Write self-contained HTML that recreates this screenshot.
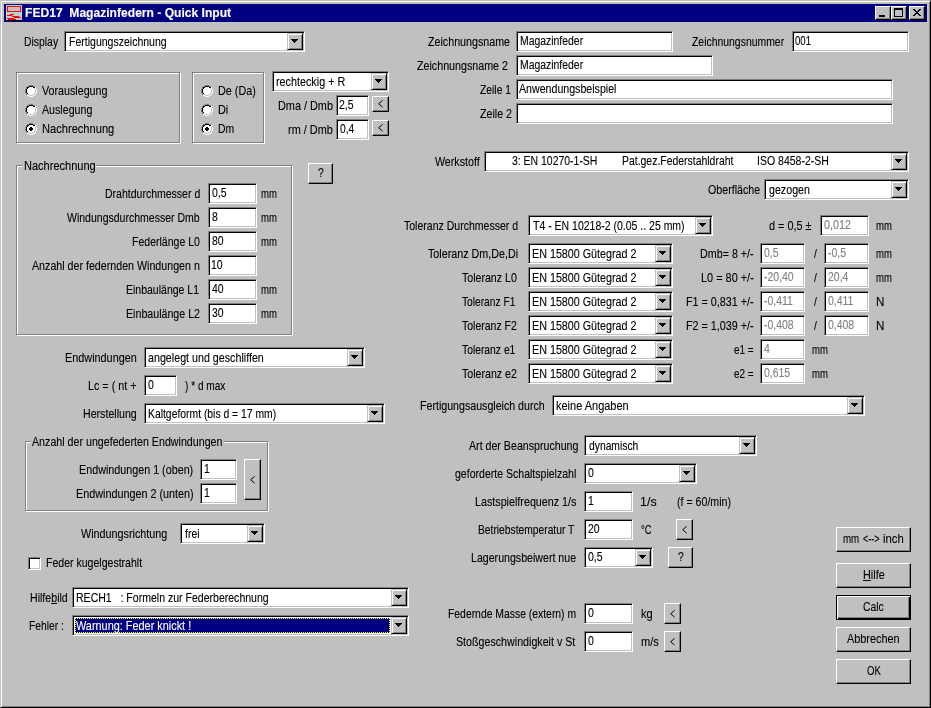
<!DOCTYPE html>
<html><head><meta charset="utf-8"><title>FED17</title>
<style>
html,body{margin:0;padding:0}
body{width:931px;height:708px;overflow:hidden;background:#c0c0c0;position:relative;font-family:"Liberation Sans",sans-serif;font-size:13px;line-height:15px}
div{box-sizing:border-box}
#tx{position:absolute;left:0;top:0;width:931px;height:708px;will-change:transform}
.t{position:absolute;-webkit-text-stroke:0.12px;transform-origin:0 0;white-space:nowrap;height:15px;line-height:15px}
.t.b{font-weight:bold}
u{text-decoration:underline;text-underline-offset:1px}
.ed{position:absolute;background:#fff;border:1px solid;border-color:#808080 #fff #fff #808080;box-shadow:inset 1px 1px 0 #000,inset -1px -1px 0 #c0c0c0}
.ed.dis{background:#fff}
.cb{position:absolute;background:#c0c0c0;border:1px solid;border-color:#c0c0c0 #000 #000 #c0c0c0;box-shadow:inset 1px 1px 0 #fff,inset -1px -1px 0 #808080}
.cb svg{position:absolute;left:3px;top:5px}
.lt{position:absolute}
.sel{position:absolute;background:#000080;outline:1px dotted #ffff00;outline-offset:-1px}
.btn{position:absolute;background:#c0c0c0;border:1px solid;border-color:#fff #000 #000 #fff;box-shadow:inset -1px -1px 0 #808080}
.btn.def{border-color:#000;box-shadow:inset 1px 1px 0 #fff,inset -1px -1px 0 #000,inset -2px -2px 0 #808080}
.gb{position:absolute;border:1px solid #808080;box-shadow:1px 1px 0 #fff}
.gb b{position:absolute;left:0;top:0;right:0;bottom:0;border-left:1px solid #fff;border-top:1px solid #fff;display:block}
.lg{position:absolute;background:#c0c0c0}
.rd{position:absolute;width:12px;height:12px}
.rd svg{display:block}
.chk{position:absolute;width:13px;height:13px;background:#fff;border:1px solid;border-color:#808080 #fff #fff #808080;box-shadow:inset 1px 1px 0 #000,inset -1px -1px 0 #c0c0c0}
.fr{position:absolute;left:0;top:0;width:931px;height:708px;border:1px solid;border-color:#c0c0c0 #000 #000 #c0c0c0;box-shadow:inset 1px 1px 0 #fff,inset -1px -1px 0 #808080;pointer-events:none}
.tb{position:absolute;left:4px;top:4px;width:923px;height:18px;background:#000080}
.wb{position:absolute;top:6px;width:16px;height:14px;background:#c0c0c0;border:1px solid;border-color:#fff #000 #000 #fff;box-shadow:inset -1px -1px 0 #808080}
</style></head><body>
<div class="fr"></div>
<div class="tb"></div>
<svg style="position:absolute;left:6px;top:5px" width="16" height="16" viewBox="0 0 16 16" shape-rendering="crispEdges">
<rect width="16" height="16" fill="#c0d0d0"/>
<rect x="1.5" y="1.5" width="13" height="5" fill="#c0c0c0" stroke="#ff0000" stroke-width="1"/>
<rect x="4" y="9" width="4" height="1" fill="#f00"/><rect x="1" y="10" width="5" height="1" fill="#f00"/>
<rect x="6" y="11" width="7" height="1" fill="#f00"/><rect x="8" y="12" width="7" height="1" fill="#f00"/>
<rect x="1" y="13" width="7" height="1" fill="#f00"/><rect x="2" y="14" width="8" height="1" fill="#f00"/>
<rect x="0" y="15" width="16" height="1" fill="#000"/>
</svg>
<div class="wb" style="left:875px"><div style="position:absolute;left:3px;top:8px;width:6px;height:2px;background:#000"></div></div>
<div class="wb" style="left:891px"><div style="position:absolute;left:2px;top:1px;width:9px;height:9px;border:1px solid #000;border-top-width:2px"></div></div>
<div class="wb" style="left:909px"><svg style="position:absolute;left:3px;top:2px" width="8" height="7" viewBox="0 0 8 7" shape-rendering="crispEdges"><path d="M0 0h2v1h1v1h2v-1h1v-1h2v1h-1v1h-1v1h-1v1h1v1h1v1h1v1h-2v-1h-1v-1h-2v1h-1v1h-2v-1h1v-1h1v-1h1v-1h-1v-1h-1v-1h-1z" fill="#000"/></svg></div>
<div class="ed" style="left:64px;top:31px;width:241px;height:21px"></div>
<div class="cb" style="left:287px;top:33px;width:16px;height:17px"><svg width="7" height="4" viewBox="0 0 7 4" shape-rendering="crispEdges"><path d="M0 0h7v1h-1v1h-1v1h-1v1h-1v-1h-1v-1h-1v-1h-1z" fill="#000"/></svg></div>
<div class="gb" style="left:16px;top:72px;width:164px;height:71px"><b></b></div>
<div class="rd" style="left:25px;top:85px"><svg width="12" height="12" viewBox="0 0 12 12" shape-rendering="crispEdges"><path fill="#808080" d="M4 0h4v1h-4zM2 1h2v1h-2zM8 1h2v1h-2zM1 2h1v1h-1zM1 3h1v1h-1zM0 4h1v1h-1zM0 5h1v1h-1zM0 6h1v1h-1zM0 7h1v1h-1zM1 8h1v1h-1zM1 9h1v1h-1z"/><path fill="#000" d="M4 1h4v1h-4zM2 2h2v1h-2zM8 2h2v1h-2zM2 3h1v1h-1zM1 4h1v1h-1zM1 5h1v1h-1zM1 6h1v1h-1zM1 7h1v1h-1zM2 8h1v1h-1z"/><path fill="#fff" d="M4 2h4v1h-4zM10 2h1v1h-1zM3 3h6v1h-6zM10 3h1v1h-1zM2 4h8v1h-8zM11 4h1v1h-1zM2 5h8v1h-8zM11 5h1v1h-1zM2 6h8v1h-8zM11 6h1v1h-1zM2 7h8v1h-8zM11 7h1v1h-1zM3 8h6v1h-6zM10 8h1v1h-1zM4 9h4v1h-4zM10 9h1v1h-1zM2 10h2v1h-2zM8 10h2v1h-2zM4 11h4v1h-4z"/><path fill="#c0c0c0" d="M9 3h1v1h-1zM10 4h1v1h-1zM10 5h1v1h-1zM10 6h1v1h-1zM10 7h1v1h-1zM9 8h1v1h-1zM2 9h2v1h-2zM8 9h2v1h-2zM4 10h4v1h-4z"/></svg></div>
<div class="rd" style="left:25px;top:104px"><svg width="12" height="12" viewBox="0 0 12 12" shape-rendering="crispEdges"><path fill="#808080" d="M4 0h4v1h-4zM2 1h2v1h-2zM8 1h2v1h-2zM1 2h1v1h-1zM1 3h1v1h-1zM0 4h1v1h-1zM0 5h1v1h-1zM0 6h1v1h-1zM0 7h1v1h-1zM1 8h1v1h-1zM1 9h1v1h-1z"/><path fill="#000" d="M4 1h4v1h-4zM2 2h2v1h-2zM8 2h2v1h-2zM2 3h1v1h-1zM1 4h1v1h-1zM1 5h1v1h-1zM1 6h1v1h-1zM1 7h1v1h-1zM2 8h1v1h-1z"/><path fill="#fff" d="M4 2h4v1h-4zM10 2h1v1h-1zM3 3h6v1h-6zM10 3h1v1h-1zM2 4h8v1h-8zM11 4h1v1h-1zM2 5h8v1h-8zM11 5h1v1h-1zM2 6h8v1h-8zM11 6h1v1h-1zM2 7h8v1h-8zM11 7h1v1h-1zM3 8h6v1h-6zM10 8h1v1h-1zM4 9h4v1h-4zM10 9h1v1h-1zM2 10h2v1h-2zM8 10h2v1h-2zM4 11h4v1h-4z"/><path fill="#c0c0c0" d="M9 3h1v1h-1zM10 4h1v1h-1zM10 5h1v1h-1zM10 6h1v1h-1zM10 7h1v1h-1zM9 8h1v1h-1zM2 9h2v1h-2zM8 9h2v1h-2zM4 10h4v1h-4z"/></svg></div>
<div class="rd" style="left:25px;top:123px"><svg width="12" height="12" viewBox="0 0 12 12" shape-rendering="crispEdges"><path fill="#808080" d="M4 0h4v1h-4zM2 1h2v1h-2zM8 1h2v1h-2zM1 2h1v1h-1zM1 3h1v1h-1zM0 4h1v1h-1zM0 5h1v1h-1zM0 6h1v1h-1zM0 7h1v1h-1zM1 8h1v1h-1zM1 9h1v1h-1z"/><path fill="#000" d="M4 1h4v1h-4zM2 2h2v1h-2zM8 2h2v1h-2zM2 3h1v1h-1zM1 4h1v1h-1zM1 5h1v1h-1zM1 6h1v1h-1zM1 7h1v1h-1zM2 8h1v1h-1z"/><path fill="#fff" d="M4 2h4v1h-4zM10 2h1v1h-1zM3 3h6v1h-6zM10 3h1v1h-1zM2 4h8v1h-8zM11 4h1v1h-1zM2 5h8v1h-8zM11 5h1v1h-1zM2 6h8v1h-8zM11 6h1v1h-1zM2 7h8v1h-8zM11 7h1v1h-1zM3 8h6v1h-6zM10 8h1v1h-1zM4 9h4v1h-4zM10 9h1v1h-1zM2 10h2v1h-2zM8 10h2v1h-2zM4 11h4v1h-4z"/><path fill="#c0c0c0" d="M9 3h1v1h-1zM10 4h1v1h-1zM10 5h1v1h-1zM10 6h1v1h-1zM10 7h1v1h-1zM9 8h1v1h-1zM2 9h2v1h-2zM8 9h2v1h-2zM4 10h4v1h-4z"/><path fill="#000000" d="M5 4h2v1h1v2h-1v1h-2v-1h-1v-2h1z"/></svg></div>
<div class="gb" style="left:192px;top:72px;width:72px;height:71px"><b></b></div>
<div class="rd" style="left:201px;top:85px"><svg width="12" height="12" viewBox="0 0 12 12" shape-rendering="crispEdges"><path fill="#808080" d="M4 0h4v1h-4zM2 1h2v1h-2zM8 1h2v1h-2zM1 2h1v1h-1zM1 3h1v1h-1zM0 4h1v1h-1zM0 5h1v1h-1zM0 6h1v1h-1zM0 7h1v1h-1zM1 8h1v1h-1zM1 9h1v1h-1z"/><path fill="#000" d="M4 1h4v1h-4zM2 2h2v1h-2zM8 2h2v1h-2zM2 3h1v1h-1zM1 4h1v1h-1zM1 5h1v1h-1zM1 6h1v1h-1zM1 7h1v1h-1zM2 8h1v1h-1z"/><path fill="#fff" d="M4 2h4v1h-4zM10 2h1v1h-1zM3 3h6v1h-6zM10 3h1v1h-1zM2 4h8v1h-8zM11 4h1v1h-1zM2 5h8v1h-8zM11 5h1v1h-1zM2 6h8v1h-8zM11 6h1v1h-1zM2 7h8v1h-8zM11 7h1v1h-1zM3 8h6v1h-6zM10 8h1v1h-1zM4 9h4v1h-4zM10 9h1v1h-1zM2 10h2v1h-2zM8 10h2v1h-2zM4 11h4v1h-4z"/><path fill="#c0c0c0" d="M9 3h1v1h-1zM10 4h1v1h-1zM10 5h1v1h-1zM10 6h1v1h-1zM10 7h1v1h-1zM9 8h1v1h-1zM2 9h2v1h-2zM8 9h2v1h-2zM4 10h4v1h-4z"/></svg></div>
<div class="rd" style="left:201px;top:104px"><svg width="12" height="12" viewBox="0 0 12 12" shape-rendering="crispEdges"><path fill="#808080" d="M4 0h4v1h-4zM2 1h2v1h-2zM8 1h2v1h-2zM1 2h1v1h-1zM1 3h1v1h-1zM0 4h1v1h-1zM0 5h1v1h-1zM0 6h1v1h-1zM0 7h1v1h-1zM1 8h1v1h-1zM1 9h1v1h-1z"/><path fill="#000" d="M4 1h4v1h-4zM2 2h2v1h-2zM8 2h2v1h-2zM2 3h1v1h-1zM1 4h1v1h-1zM1 5h1v1h-1zM1 6h1v1h-1zM1 7h1v1h-1zM2 8h1v1h-1z"/><path fill="#fff" d="M4 2h4v1h-4zM10 2h1v1h-1zM3 3h6v1h-6zM10 3h1v1h-1zM2 4h8v1h-8zM11 4h1v1h-1zM2 5h8v1h-8zM11 5h1v1h-1zM2 6h8v1h-8zM11 6h1v1h-1zM2 7h8v1h-8zM11 7h1v1h-1zM3 8h6v1h-6zM10 8h1v1h-1zM4 9h4v1h-4zM10 9h1v1h-1zM2 10h2v1h-2zM8 10h2v1h-2zM4 11h4v1h-4z"/><path fill="#c0c0c0" d="M9 3h1v1h-1zM10 4h1v1h-1zM10 5h1v1h-1zM10 6h1v1h-1zM10 7h1v1h-1zM9 8h1v1h-1zM2 9h2v1h-2zM8 9h2v1h-2zM4 10h4v1h-4z"/></svg></div>
<div class="rd" style="left:201px;top:123px"><svg width="12" height="12" viewBox="0 0 12 12" shape-rendering="crispEdges"><path fill="#808080" d="M4 0h4v1h-4zM2 1h2v1h-2zM8 1h2v1h-2zM1 2h1v1h-1zM1 3h1v1h-1zM0 4h1v1h-1zM0 5h1v1h-1zM0 6h1v1h-1zM0 7h1v1h-1zM1 8h1v1h-1zM1 9h1v1h-1z"/><path fill="#000" d="M4 1h4v1h-4zM2 2h2v1h-2zM8 2h2v1h-2zM2 3h1v1h-1zM1 4h1v1h-1zM1 5h1v1h-1zM1 6h1v1h-1zM1 7h1v1h-1zM2 8h1v1h-1z"/><path fill="#fff" d="M4 2h4v1h-4zM10 2h1v1h-1zM3 3h6v1h-6zM10 3h1v1h-1zM2 4h8v1h-8zM11 4h1v1h-1zM2 5h8v1h-8zM11 5h1v1h-1zM2 6h8v1h-8zM11 6h1v1h-1zM2 7h8v1h-8zM11 7h1v1h-1zM3 8h6v1h-6zM10 8h1v1h-1zM4 9h4v1h-4zM10 9h1v1h-1zM2 10h2v1h-2zM8 10h2v1h-2zM4 11h4v1h-4z"/><path fill="#c0c0c0" d="M9 3h1v1h-1zM10 4h1v1h-1zM10 5h1v1h-1zM10 6h1v1h-1zM10 7h1v1h-1zM9 8h1v1h-1zM2 9h2v1h-2zM8 9h2v1h-2zM4 10h4v1h-4z"/><path fill="#000000" d="M5 4h2v1h1v2h-1v1h-2v-1h-1v-2h1z"/></svg></div>
<div class="ed" style="left:272px;top:71px;width:117px;height:21px"></div>
<div class="cb" style="left:371px;top:73px;width:16px;height:17px"><svg width="7" height="4" viewBox="0 0 7 4" shape-rendering="crispEdges"><path d="M0 0h7v1h-1v1h-1v1h-1v1h-1v-1h-1v-1h-1v-1h-1z" fill="#000"/></svg></div>
<div class="ed" style="left:336px;top:95px;width:33px;height:21px"></div>
<div class="btn" style="left:372px;top:96px;width:17px;height:16px"></div>
<svg class="lt" style="left:378px;top:100px" width="5" height="8" viewBox="0 0 5 8"><path d="M4.6 0.4L0.7 3.7L4.6 7.2" fill="none" stroke="#000" stroke-width="1"/></svg>
<div class="ed" style="left:336px;top:119px;width:33px;height:21px"></div>
<div class="btn" style="left:372px;top:120px;width:17px;height:16px"></div>
<svg class="lt" style="left:378px;top:124px" width="5" height="8" viewBox="0 0 5 8"><path d="M4.6 0.4L0.7 3.7L4.6 7.2" fill="none" stroke="#000" stroke-width="1"/></svg>
<div class="gb" style="left:16px;top:165px;width:276px;height:170px"><b></b></div>
<div class="lg" style="left:23px;top:163px;width:73px;height:6px"></div>
<div class="btn" style="left:308px;top:163px;width:25px;height:21px"></div>
<div class="ed" style="left:208px;top:183px;width:49px;height:21px"></div>
<div class="ed" style="left:208px;top:207px;width:49px;height:21px"></div>
<div class="ed" style="left:208px;top:231px;width:49px;height:21px"></div>
<div class="ed" style="left:208px;top:255px;width:49px;height:21px"></div>
<div class="ed" style="left:208px;top:279px;width:49px;height:21px"></div>
<div class="ed" style="left:208px;top:303px;width:49px;height:21px"></div>
<div class="ed" style="left:144px;top:347px;width:221px;height:21px"></div>
<div class="cb" style="left:347px;top:349px;width:16px;height:17px"><svg width="7" height="4" viewBox="0 0 7 4" shape-rendering="crispEdges"><path d="M0 0h7v1h-1v1h-1v1h-1v1h-1v-1h-1v-1h-1v-1h-1z" fill="#000"/></svg></div>
<div class="ed" style="left:144px;top:375px;width:33px;height:21px"></div>
<div class="ed" style="left:144px;top:403px;width:241px;height:21px"></div>
<div class="cb" style="left:367px;top:405px;width:16px;height:17px"><svg width="7" height="4" viewBox="0 0 7 4" shape-rendering="crispEdges"><path d="M0 0h7v1h-1v1h-1v1h-1v1h-1v-1h-1v-1h-1v-1h-1z" fill="#000"/></svg></div>
<div class="gb" style="left:25px;top:441px;width:243px;height:70px"><b></b></div>
<div class="lg" style="left:31px;top:439px;width:192.5px;height:6px"></div>
<div class="ed" style="left:200px;top:459px;width:37px;height:21px"></div>
<div class="ed" style="left:200px;top:483px;width:37px;height:21px"></div>
<div class="btn" style="left:244px;top:459px;width:17px;height:41px"></div>
<svg class="lt" style="left:250px;top:476px" width="5" height="8" viewBox="0 0 5 8"><path d="M4.6 0.4L0.7 3.7L4.6 7.2" fill="none" stroke="#000" stroke-width="1"/></svg>
<div class="ed" style="left:180px;top:523px;width:85px;height:21px"></div>
<div class="cb" style="left:247px;top:525px;width:16px;height:17px"><svg width="7" height="4" viewBox="0 0 7 4" shape-rendering="crispEdges"><path d="M0 0h7v1h-1v1h-1v1h-1v1h-1v-1h-1v-1h-1v-1h-1z" fill="#000"/></svg></div>
<div class="chk" style="left:28px;top:557px"></div>
<div class="ed" style="left:72px;top:587px;width:337px;height:21px"></div>
<div class="cb" style="left:391px;top:589px;width:16px;height:17px"><svg width="7" height="4" viewBox="0 0 7 4" shape-rendering="crispEdges"><path d="M0 0h7v1h-1v1h-1v1h-1v1h-1v-1h-1v-1h-1v-1h-1z" fill="#000"/></svg></div>
<div class="ed" style="left:72px;top:615px;width:337px;height:21px"></div>
<div class="cb" style="left:391px;top:617px;width:16px;height:17px"><svg width="7" height="4" viewBox="0 0 7 4" shape-rendering="crispEdges"><path d="M0 0h7v1h-1v1h-1v1h-1v1h-1v-1h-1v-1h-1v-1h-1z" fill="#000"/></svg></div>
<div class="sel" style="left:75px;top:618px;width:315px;height:15px"></div>
<div class="ed" style="left:516px;top:31px;width:157px;height:21px"></div>
<div class="ed" style="left:792px;top:31px;width:117px;height:21px"></div>
<div class="ed" style="left:516px;top:55px;width:197px;height:21px"></div>
<div class="ed" style="left:516px;top:79px;width:377px;height:21px"></div>
<div class="ed" style="left:516px;top:103px;width:377px;height:21px"></div>
<div class="ed" style="left:484px;top:151px;width:425px;height:21px"></div>
<div class="cb" style="left:891px;top:153px;width:16px;height:17px"><svg width="7" height="4" viewBox="0 0 7 4" shape-rendering="crispEdges"><path d="M0 0h7v1h-1v1h-1v1h-1v1h-1v-1h-1v-1h-1v-1h-1z" fill="#000"/></svg></div>
<div class="ed" style="left:764px;top:179px;width:145px;height:21px"></div>
<div class="cb" style="left:891px;top:181px;width:16px;height:17px"><svg width="7" height="4" viewBox="0 0 7 4" shape-rendering="crispEdges"><path d="M0 0h7v1h-1v1h-1v1h-1v1h-1v-1h-1v-1h-1v-1h-1z" fill="#000"/></svg></div>
<div class="ed" style="left:528px;top:215px;width:185px;height:21px"></div>
<div class="cb" style="left:695px;top:217px;width:16px;height:17px"><svg width="7" height="4" viewBox="0 0 7 4" shape-rendering="crispEdges"><path d="M0 0h7v1h-1v1h-1v1h-1v1h-1v-1h-1v-1h-1v-1h-1z" fill="#000"/></svg></div>
<div class="ed dis" style="left:820px;top:215px;width:49px;height:21px"></div>
<div class="ed" style="left:528px;top:243px;width:145px;height:21px"></div>
<div class="cb" style="left:655px;top:245px;width:16px;height:17px"><svg width="7" height="4" viewBox="0 0 7 4" shape-rendering="crispEdges"><path d="M0 0h7v1h-1v1h-1v1h-1v1h-1v-1h-1v-1h-1v-1h-1z" fill="#000"/></svg></div>
<div class="ed dis" style="left:760px;top:243px;width:45px;height:21px"></div>
<div class="ed dis" style="left:824px;top:243px;width:45px;height:21px"></div>
<div class="ed" style="left:528px;top:267px;width:145px;height:21px"></div>
<div class="cb" style="left:655px;top:269px;width:16px;height:17px"><svg width="7" height="4" viewBox="0 0 7 4" shape-rendering="crispEdges"><path d="M0 0h7v1h-1v1h-1v1h-1v1h-1v-1h-1v-1h-1v-1h-1z" fill="#000"/></svg></div>
<div class="ed dis" style="left:760px;top:267px;width:45px;height:21px"></div>
<div class="ed dis" style="left:824px;top:267px;width:45px;height:21px"></div>
<div class="ed" style="left:528px;top:291px;width:145px;height:21px"></div>
<div class="cb" style="left:655px;top:293px;width:16px;height:17px"><svg width="7" height="4" viewBox="0 0 7 4" shape-rendering="crispEdges"><path d="M0 0h7v1h-1v1h-1v1h-1v1h-1v-1h-1v-1h-1v-1h-1z" fill="#000"/></svg></div>
<div class="ed dis" style="left:760px;top:291px;width:45px;height:21px"></div>
<div class="ed dis" style="left:824px;top:291px;width:45px;height:21px"></div>
<div class="ed" style="left:528px;top:315px;width:145px;height:21px"></div>
<div class="cb" style="left:655px;top:317px;width:16px;height:17px"><svg width="7" height="4" viewBox="0 0 7 4" shape-rendering="crispEdges"><path d="M0 0h7v1h-1v1h-1v1h-1v1h-1v-1h-1v-1h-1v-1h-1z" fill="#000"/></svg></div>
<div class="ed dis" style="left:760px;top:315px;width:45px;height:21px"></div>
<div class="ed dis" style="left:824px;top:315px;width:45px;height:21px"></div>
<div class="ed" style="left:528px;top:339px;width:145px;height:21px"></div>
<div class="cb" style="left:655px;top:341px;width:16px;height:17px"><svg width="7" height="4" viewBox="0 0 7 4" shape-rendering="crispEdges"><path d="M0 0h7v1h-1v1h-1v1h-1v1h-1v-1h-1v-1h-1v-1h-1z" fill="#000"/></svg></div>
<div class="ed dis" style="left:760px;top:339px;width:45px;height:21px"></div>
<div class="ed" style="left:528px;top:363px;width:145px;height:21px"></div>
<div class="cb" style="left:655px;top:365px;width:16px;height:17px"><svg width="7" height="4" viewBox="0 0 7 4" shape-rendering="crispEdges"><path d="M0 0h7v1h-1v1h-1v1h-1v1h-1v-1h-1v-1h-1v-1h-1z" fill="#000"/></svg></div>
<div class="ed dis" style="left:760px;top:363px;width:45px;height:21px"></div>
<div class="ed" style="left:552px;top:395px;width:313px;height:21px"></div>
<div class="cb" style="left:847px;top:397px;width:16px;height:17px"><svg width="7" height="4" viewBox="0 0 7 4" shape-rendering="crispEdges"><path d="M0 0h7v1h-1v1h-1v1h-1v1h-1v-1h-1v-1h-1v-1h-1z" fill="#000"/></svg></div>
<div class="ed" style="left:584px;top:435px;width:173px;height:21px"></div>
<div class="cb" style="left:739px;top:437px;width:16px;height:17px"><svg width="7" height="4" viewBox="0 0 7 4" shape-rendering="crispEdges"><path d="M0 0h7v1h-1v1h-1v1h-1v1h-1v-1h-1v-1h-1v-1h-1z" fill="#000"/></svg></div>
<div class="ed" style="left:584px;top:463px;width:113px;height:21px"></div>
<div class="cb" style="left:679px;top:465px;width:16px;height:17px"><svg width="7" height="4" viewBox="0 0 7 4" shape-rendering="crispEdges"><path d="M0 0h7v1h-1v1h-1v1h-1v1h-1v-1h-1v-1h-1v-1h-1z" fill="#000"/></svg></div>
<div class="ed" style="left:584px;top:491px;width:49px;height:21px"></div>
<div class="ed" style="left:584px;top:519px;width:49px;height:21px"></div>
<div class="btn" style="left:676px;top:519px;width:17px;height:21px"></div>
<svg class="lt" style="left:682px;top:526px" width="5" height="8" viewBox="0 0 5 8"><path d="M4.6 0.4L0.7 3.7L4.6 7.2" fill="none" stroke="#000" stroke-width="1"/></svg>
<div class="ed" style="left:584px;top:547px;width:69px;height:21px"></div>
<div class="cb" style="left:635px;top:549px;width:16px;height:17px"><svg width="7" height="4" viewBox="0 0 7 4" shape-rendering="crispEdges"><path d="M0 0h7v1h-1v1h-1v1h-1v1h-1v-1h-1v-1h-1v-1h-1z" fill="#000"/></svg></div>
<div class="btn" style="left:668px;top:547px;width:25px;height:21px"></div>
<div class="ed" style="left:584px;top:603px;width:49px;height:21px"></div>
<div class="btn" style="left:664px;top:603px;width:17px;height:21px"></div>
<svg class="lt" style="left:670px;top:610px" width="5" height="8" viewBox="0 0 5 8"><path d="M4.6 0.4L0.7 3.7L4.6 7.2" fill="none" stroke="#000" stroke-width="1"/></svg>
<div class="ed" style="left:584px;top:631px;width:49px;height:21px"></div>
<div class="btn" style="left:664px;top:631px;width:17px;height:21px"></div>
<svg class="lt" style="left:670px;top:638px" width="5" height="8" viewBox="0 0 5 8"><path d="M4.6 0.4L0.7 3.7L4.6 7.2" fill="none" stroke="#000" stroke-width="1"/></svg>
<div class="btn" style="left:836px;top:527px;width:75px;height:25px"></div>
<div class="btn" style="left:836px;top:563px;width:75px;height:25px"></div>
<div class="btn def" style="left:836px;top:595px;width:75px;height:25px"></div>
<div class="btn" style="left:836px;top:627px;width:75px;height:25px"></div>
<div class="btn" style="left:836px;top:659px;width:75px;height:25px"></div>
<div id="tx">
<div class="t" style="left:24.10px;top:34.00px;transform:scaleX(0.8000);color:#000;">Display</div>
<div class="t" style="left:68.59px;top:34.00px;transform:scaleX(0.8093);color:#000;">Fertigungszeichnung</div>
<div class="t" style="left:42.40px;top:83.00px;transform:scaleX(0.8229);color:#000;">Vorauslegung</div>
<div class="t" style="left:42.40px;top:102.00px;transform:scaleX(0.8198);color:#000;">Auslegung</div>
<div class="t" style="left:41.55px;top:121.00px;transform:scaleX(0.8544);color:#000;">Nachrechnung</div>
<div class="t" style="left:218.07px;top:83.00px;transform:scaleX(0.8298);color:#000;">De (Da)</div>
<div class="t" style="left:218.06px;top:102.00px;transform:scaleX(0.8386);color:#000;">Di</div>
<div class="t" style="left:218.10px;top:121.00px;transform:scaleX(0.8000);color:#000;">Dm</div>
<div class="t" style="left:276.07px;top:74.00px;transform:scaleX(0.8293);color:#000;">rechteckig + R</div>
<div class="t" style="left:278.26px;top:98.00px;transform:scaleX(0.8358);color:#000;">Dma / Dmb</div>
<div class="t" style="left:339.40px;top:97.00px;transform:scaleX(0.8059);color:#000;">2,5</div>
<div class="t" style="left:288.26px;top:122.00px;transform:scaleX(0.8403);color:#000;">rm / Dmb</div>
<div class="t" style="left:339.50px;top:121.00px;transform:scaleX(0.7942);color:#000;">0,4</div>
<div class="t" style="left:23.55px;top:158.00px;transform:scaleX(0.8483);color:#000;">Nachrechnung</div>
<div class="t" style="left:317.59px;top:165.00px;transform:scaleX(0.8033);color:#000;">?</div>
<div class="t" style="left:105.09px;top:186.00px;transform:scaleX(0.8086);color:#000;">Drahtdurchmesser d</div>
<div class="t" style="left:211.70px;top:185.00px;transform:scaleX(0.8050);color:#000;">0,5</div>
<div class="t" style="left:260.76px;top:186.00px;transform:scaleX(0.7350);color:#000;">mm</div>
<div class="t" style="left:67.40px;top:210.00px;transform:scaleX(0.8086);color:#000;">Windungsdurchmesser Dmb</div>
<div class="t" style="left:211.70px;top:209.00px;transform:scaleX(0.8050);color:#000;">8</div>
<div class="t" style="left:260.76px;top:210.00px;transform:scaleX(0.7350);color:#000;">mm</div>
<div class="t" style="left:132.09px;top:234.00px;transform:scaleX(0.8097);color:#000;">Federlänge L0</div>
<div class="t" style="left:211.70px;top:233.00px;transform:scaleX(0.8050);color:#000;">80</div>
<div class="t" style="left:260.76px;top:234.00px;transform:scaleX(0.7350);color:#000;">mm</div>
<div class="t" style="left:32.40px;top:258.00px;transform:scaleX(0.8206);color:#000;">Anzahl der federnden Windungen n</div>
<div class="t" style="left:211.29px;top:257.00px;transform:scaleX(0.8050);color:#000;">10</div>
<div class="t" style="left:126.09px;top:282.00px;transform:scaleX(0.8079);color:#000;">Einbaulänge L1</div>
<div class="t" style="left:211.90px;top:281.00px;transform:scaleX(0.8050);color:#000;">40</div>
<div class="t" style="left:260.76px;top:282.00px;transform:scaleX(0.7350);color:#000;">mm</div>
<div class="t" style="left:126.08px;top:306.00px;transform:scaleX(0.8192);color:#000;">Einbaulänge L2</div>
<div class="t" style="left:211.70px;top:305.00px;transform:scaleX(0.8050);color:#000;">30</div>
<div class="t" style="left:260.76px;top:306.00px;transform:scaleX(0.7350);color:#000;">mm</div>
<div class="t" style="left:65.07px;top:350.00px;transform:scaleX(0.8345);color:#000;">Endwindungen</div>
<div class="t" style="left:147.99px;top:350.00px;transform:scaleX(0.8230);color:#000;">angelegt und geschliffen</div>
<div class="t" style="left:88.07px;top:378.00px;transform:scaleX(0.8281);color:#000;">Lc = ( nt +</div>
<div class="t" style="left:147.70px;top:377.00px;transform:scaleX(0.8050);color:#000;">0</div>
<div class="t" style="left:184.80px;top:378.00px;transform:scaleX(0.7768);color:#000;">) * d max</div>
<div class="t" style="left:83.08px;top:406.00px;transform:scaleX(0.8172);color:#000;">Herstellung</div>
<div class="t" style="left:147.60px;top:406.00px;transform:scaleX(0.7975);color:#000;">Kaltgeformt (bis d = 17 mm)</div>
<div class="t" style="left:32.40px;top:434.00px;transform:scaleX(0.8208);color:#000;">Anzahl der ungefederten Endwindungen</div>
<div class="t" style="left:79.07px;top:462.00px;transform:scaleX(0.8272);color:#000;">Endwindungen 1 (oben)</div>
<div class="t" style="left:203.59px;top:461.00px;transform:scaleX(0.8050);color:#000;">1</div>
<div class="t" style="left:75.57px;top:486.00px;transform:scaleX(0.8307);color:#000;">Endwindungen 2 (unten)</div>
<div class="t" style="left:203.59px;top:485.00px;transform:scaleX(0.8050);color:#000;">1</div>
<div class="t" style="left:81.40px;top:526.00px;transform:scaleX(0.8300);color:#000;">Windungsrichtung</div>
<div class="t" style="left:184.80px;top:526.00px;transform:scaleX(0.8059);color:#000;">frei</div>
<div class="t" style="left:46.09px;top:555.00px;transform:scaleX(0.8111);color:#000;">Feder kugelgestrahlt</div>
<div class="t" style="left:30.08px;top:590.00px;transform:scaleX(0.8158);color:#000;">Hilfe<u>b</u>ild</div>
<div class="t" style="left:76.09px;top:590.00px;transform:scaleX(0.8106);color:#000;">RECH1 &nbsp; : Formeln zur Federberechnung</div>
<div class="t" style="left:29.11px;top:618.00px;transform:scaleX(0.7905);color:#000;">Fehler :</div>
<div class="t" style="left:76.40px;top:618.00px;transform:scaleX(0.8374);color:#fff;">Warnung: Feder knickt !</div>
<div class="t" style="left:428.09px;top:34.00px;transform:scaleX(0.8223);color:#000;">Zeichnungsname</div>
<div class="t" style="left:519.60px;top:33.00px;transform:scaleX(0.8013);color:#000;">Magazinfeder</div>
<div class="t" style="left:691.60px;top:34.00px;transform:scaleX(0.8017);color:#000;">Zeichnungsnummer</div>
<div class="t" style="left:795.33px;top:33.00px;transform:scaleX(0.7370);color:#000;">001</div>
<div class="t" style="left:417.09px;top:58.00px;transform:scaleX(0.8228);color:#000;">Zeichnungsname 2</div>
<div class="t" style="left:519.60px;top:57.00px;transform:scaleX(0.8013);color:#000;">Magazinfeder</div>
<div class="t" style="left:480.10px;top:82.00px;transform:scaleX(0.7947);color:#000;">Zeile 1</div>
<div class="t" style="left:519.40px;top:81.00px;transform:scaleX(0.8169);color:#000;">Anwendungsbeispiel</div>
<div class="t" style="left:480.09px;top:106.00px;transform:scaleX(0.8211);color:#000;">Zeile 2</div>
<div class="t" style="left:434.90px;top:154.00px;transform:scaleX(0.8202);color:#000;">Werkstoff</div>
<div class="t" style="left:512.00px;top:153.00px;transform:scaleX(0.8038);color:#000;">3: EN 10270-1-SH</div>
<div class="t" style="left:622.30px;top:153.00px;transform:scaleX(0.8029);color:#000;">Pat.gez.Federstahldraht</div>
<div class="t" style="left:757.49px;top:153.00px;transform:scaleX(0.8092);color:#000;">ISO 8458-2-SH</div>
<div class="t" style="left:707.89px;top:182.00px;transform:scaleX(0.8208);color:#000;">Oberfläche</div>
<div class="t" style="left:768.69px;top:182.00px;transform:scaleX(0.8206);color:#000;">gezogen</div>
<div class="t" style="left:404.20px;top:218.00px;transform:scaleX(0.8100);color:#000;">Toleranz Durchmesser d</div>
<div class="t" style="left:532.70px;top:218.00px;transform:scaleX(0.8070);color:#000;">T4 - EN 10218-2 (0.05 .. 25 mm)</div>
<div class="t" style="left:769.48px;top:218.00px;transform:scaleX(0.8340);color:#000;">d = 0,5 ±</div>
<div class="t" style="left:823.59px;top:217.00px;transform:scaleX(0.8255);color:#808080;">0,012</div>
<div class="t" style="left:876.36px;top:218.00px;transform:scaleX(0.7300);color:#000;">mm</div>
<div class="t" style="left:428.19px;top:246.00px;transform:scaleX(0.8259);color:#000;">Toleranz Dm,De,Di</div>
<div class="t" style="left:532.07px;top:246.00px;transform:scaleX(0.8264);color:#000;">EN 15800 Gütegrad 2</div>
<div class="t" style="left:700.07px;top:246.00px;transform:scaleX(0.8252);color:#000;">Dmb= 8 +/-</div>
<div class="t" style="left:763.60px;top:245.00px;transform:scaleX(0.8050);color:#808080;">0,5</div>
<div class="t" style="left:813.70px;top:246.00px;transform:scaleX(0.8050);color:#000;">/</div>
<div class="t" style="left:827.60px;top:245.00px;transform:scaleX(0.8050);color:#808080;">-0,5</div>
<div class="t" style="left:876.36px;top:246.00px;transform:scaleX(0.7300);color:#000;">mm</div>
<div class="t" style="left:462.20px;top:270.00px;transform:scaleX(0.8150);color:#000;">Toleranz L0</div>
<div class="t" style="left:532.07px;top:270.00px;transform:scaleX(0.8264);color:#000;">EN 15800 Gütegrad 2</div>
<div class="t" style="left:701.06px;top:270.00px;transform:scaleX(0.8392);color:#000;">L0 = 80 +/-</div>
<div class="t" style="left:763.60px;top:269.00px;transform:scaleX(0.8050);color:#808080;">-20,40</div>
<div class="t" style="left:813.70px;top:270.00px;transform:scaleX(0.8050);color:#000;">/</div>
<div class="t" style="left:827.50px;top:269.00px;transform:scaleX(0.8050);color:#808080;">20,4</div>
<div class="t" style="left:876.36px;top:270.00px;transform:scaleX(0.7300);color:#000;">mm</div>
<div class="t" style="left:462.20px;top:294.00px;transform:scaleX(0.7851);color:#000;">Toleranz F1</div>
<div class="t" style="left:532.07px;top:294.00px;transform:scaleX(0.8264);color:#000;">EN 15800 Gütegrad 2</div>
<div class="t" style="left:686.07px;top:294.00px;transform:scaleX(0.8287);color:#000;">F1 = 0,831 +/-</div>
<div class="t" style="left:763.60px;top:293.00px;transform:scaleX(0.8050);color:#808080;">-0,411</div>
<div class="t" style="left:813.70px;top:294.00px;transform:scaleX(0.8050);color:#000;">/</div>
<div class="t" style="left:827.60px;top:293.00px;transform:scaleX(0.8050);color:#808080;">0,411</div>
<div class="t" style="left:876.11px;top:294.00px;transform:scaleX(0.8949);color:#000;">N</div>
<div class="t" style="left:462.20px;top:318.00px;transform:scaleX(0.8074);color:#000;">Toleranz F2</div>
<div class="t" style="left:532.07px;top:318.00px;transform:scaleX(0.8264);color:#000;">EN 15800 Gütegrad 2</div>
<div class="t" style="left:686.07px;top:318.00px;transform:scaleX(0.8287);color:#000;">F2 = 1,039 +/-</div>
<div class="t" style="left:763.60px;top:317.00px;transform:scaleX(0.8050);color:#808080;">-0,408</div>
<div class="t" style="left:813.70px;top:318.00px;transform:scaleX(0.8050);color:#000;">/</div>
<div class="t" style="left:827.60px;top:317.00px;transform:scaleX(0.8050);color:#808080;">0,408</div>
<div class="t" style="left:876.11px;top:318.00px;transform:scaleX(0.8949);color:#000;">N</div>
<div class="t" style="left:462.20px;top:342.00px;transform:scaleX(0.7940);color:#000;">Toleranz e1</div>
<div class="t" style="left:532.07px;top:342.00px;transform:scaleX(0.8264);color:#000;">EN 15800 Gütegrad 2</div>
<div class="t" style="left:734.02px;top:342.00px;transform:scaleX(0.7675);color:#000;">e1 =</div>
<div class="t" style="left:763.80px;top:341.00px;transform:scaleX(0.8050);color:#808080;">4</div>
<div class="t" style="left:812.26px;top:342.00px;transform:scaleX(0.7350);color:#000;">mm</div>
<div class="t" style="left:462.20px;top:366.00px;transform:scaleX(0.8166);color:#000;">Toleranz e2</div>
<div class="t" style="left:532.07px;top:366.00px;transform:scaleX(0.8264);color:#000;">EN 15800 Gütegrad 2</div>
<div class="t" style="left:734.02px;top:366.00px;transform:scaleX(0.7675);color:#000;">e2 =</div>
<div class="t" style="left:763.60px;top:365.00px;transform:scaleX(0.8050);color:#808080;">0,615</div>
<div class="t" style="left:812.26px;top:366.00px;transform:scaleX(0.7350);color:#000;">mm</div>
<div class="t" style="left:420.08px;top:398.00px;transform:scaleX(0.8179);color:#000;">Fertigungsausgleich durch</div>
<div class="t" style="left:555.66px;top:398.00px;transform:scaleX(0.8451);color:#000;">keine Angaben</div>
<div class="t" style="left:469.40px;top:438.00px;transform:scaleX(0.8181);color:#000;">Art der Beanspruchung</div>
<div class="t" style="left:589.00px;top:438.00px;transform:scaleX(0.7934);color:#000;">dynamisch</div>
<div class="t" style="left:455.49px;top:466.00px;transform:scaleX(0.8108);color:#000;">geforderte Schaltspielzahl</div>
<div class="t" style="left:587.50px;top:465.00px;transform:scaleX(0.8050);color:#000;">0</div>
<div class="t" style="left:475.07px;top:494.00px;transform:scaleX(0.8255);color:#000;">Lastspielfrequenz 1/s</div>
<div class="t" style="left:587.60px;top:493.00px;transform:scaleX(0.8050);color:#000;">1</div>
<div class="t" style="left:639.94px;top:494.00px;transform:scaleX(0.9575);color:#000;">1/s</div>
<div class="t" style="left:676.79px;top:494.00px;transform:scaleX(0.8171);color:#000;">(f = 60/min)</div>
<div class="t" style="left:478.11px;top:522.00px;transform:scaleX(0.7900);color:#000;">Betriebstemperatur T</div>
<div class="t" style="left:587.60px;top:521.00px;transform:scaleX(0.8050);color:#000;">20</div>
<div class="t" style="left:640.86px;top:522.00px;transform:scaleX(0.7252);color:#000;">°C</div>
<div class="t" style="left:471.08px;top:550.00px;transform:scaleX(0.8165);color:#000;">Lagerungsbeiwert nue</div>
<div class="t" style="left:587.70px;top:549.00px;transform:scaleX(0.8050);color:#000;">0,5</div>
<div class="t" style="left:677.59px;top:549.00px;transform:scaleX(0.8033);color:#000;">?</div>
<div class="t" style="left:448.10px;top:606.00px;transform:scaleX(0.7987);color:#000;">Federnde Masse (extern) m</div>
<div class="t" style="left:588.00px;top:605.00px;transform:scaleX(0.8050);color:#000;">0</div>
<div class="t" style="left:640.66px;top:606.00px;transform:scaleX(0.8500);color:#000;">kg</div>
<div class="t" style="left:456.39px;top:634.00px;transform:scaleX(0.8215);color:#000;">Stoßgeschwindigkeit v St</div>
<div class="t" style="left:588.00px;top:633.00px;transform:scaleX(0.8050);color:#000;">0</div>
<div class="t" style="left:640.66px;top:634.00px;transform:scaleX(0.8510);color:#000;">m/s</div>
<div class="t" style="left:843.14px;top:531.00px;transform:scaleX(0.7500);color:#000;">mm</div>
<div class="t" style="left:862.77px;top:531.00px;transform:scaleX(0.6939);color:#000;">&lt;--&gt;</div>
<div class="t" style="left:883.34px;top:531.00px;transform:scaleX(0.8678);color:#000;">inch</div>
<div class="t" style="left:862.86px;top:567.00px;transform:scaleX(0.8369);color:#000;"><u>H</u>ilfe</div>
<div class="t" style="left:863.40px;top:599.00px;transform:scaleX(0.7960);color:#000;">Calc</div>
<div class="t" style="left:847.30px;top:631.00px;transform:scaleX(0.8355);color:#000;">Abbrechen</div>
<div class="t" style="left:866.64px;top:663.00px;transform:scaleX(0.7389);color:#000;">OK</div>
<div class="t b" style="left:24.59px;top:5.20px;transform:scaleX(0.9296);color:#fff;">FED17 &nbsp;Magazinfedern - Quick Input</div>
</div>
</body></html>
